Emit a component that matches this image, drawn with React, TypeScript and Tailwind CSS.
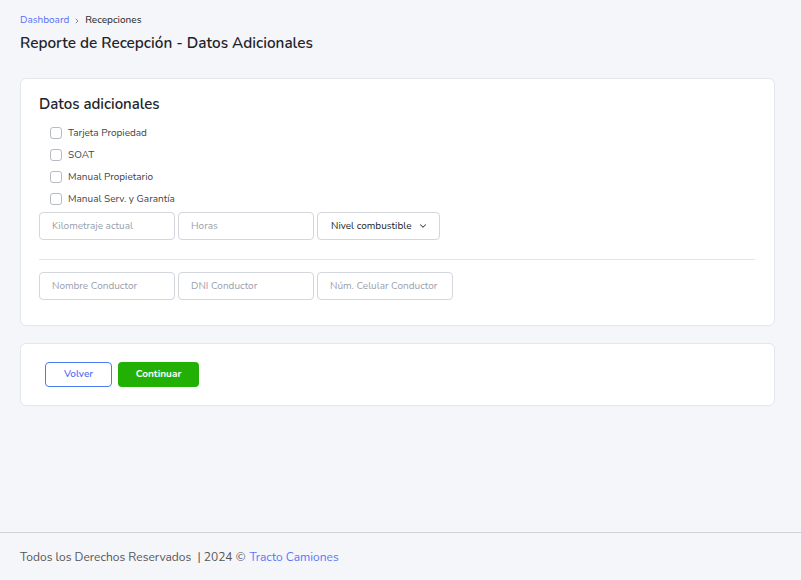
import { ChevronRight, ChevronDown } from 'lucide-react';

const font = { fontFamily: '"Nunito", "Lato", "Noto Sans", sans-serif' };

const checks = ['Tarjeta Propiedad', 'SOAT', 'Manual Propietario', 'Manual Serv. y Garantía'];

function Field({ placeholder, w = 'w-[136px]' }: { placeholder: string; w?: string }) {
  return (
    <input
      placeholder={placeholder}
      className={`${w} h-[28px] rounded-[4px] border border-[#d4d6de] bg-white px-3 text-[10px] text-[#333] placeholder:text-[#9aa0ac] outline-none`}
    />
  );
}

export default function App() {
  return (
    <div className="min-h-[580px] bg-[#f5f6fa] flex flex-col text-[#212529]" style={font}>
      <div className="flex-1 pl-5 pr-[26px] pt-[14px]">
        <div className="flex items-center gap-[4px] text-[10px] leading-[13px]">
          <span className="text-[#5470f5]">Dashboard</span>
          <ChevronRight className="w-[8px] h-[8px] text-[#888]" strokeWidth={3} />
          <span className="text-[#333] font-medium">Recepciones</span>
        </div>
        <h1 className="mt-[6px] text-[15.3px] leading-[20px] font-semibold text-[#1e2329]">
          Reporte de Recepción - Datos Adicionales
        </h1>

        <div className="mt-[25px] bg-white border border-[#e4e6ee] rounded-[6px] pl-[18px] pr-[19px] pt-[15px] pb-[25px]">
          <h2 className="text-[15px] leading-[20px] font-semibold text-[#1e2329]">Datos adicionales</h2>
          <div className="mt-[12px] flex flex-col gap-[8px] pl-[11px]">
            {checks.map((c) => (
              <label key={c} className="flex items-center gap-[6px] h-[14px] text-[10px] text-[#444]">
                <span className="w-[12px] h-[12px] rounded-[3px] border border-[#b8bcc6] bg-white" />
                {c}
              </label>
            ))}
          </div>
          <div className="mt-[6px] flex gap-[3px]">
            <Field placeholder="Kilometraje actual" />
            <Field placeholder="Horas" />
            <div className="w-[123px] h-[28px] rounded-[4px] border border-[#d4d6de] bg-white pl-[13px] pr-[11px] flex items-center justify-between text-[10px] text-[#222]">
              <span>Nivel combustible</span>
              <ChevronDown className="w-[10px] h-[10px] text-[#444]" strokeWidth={2.5} />
            </div>
          </div>
          <div className="mt-[19px] border-t border-[#e2e4ea]" />
          <div className="mt-[12px] flex gap-[3px]">
            <Field placeholder="Nombre Conductor" />
            <Field placeholder="DNI Conductor" />
            <Field placeholder="Núm. Celular Conductor" />
          </div>
        </div>

        <div className="mt-[17px] bg-white border border-[#e4e6ee] rounded-[6px] px-[24px] pt-[18px] pb-[18px] flex gap-[6px]">
          <button className="w-[67px] h-[25px] rounded-[4px] border border-[#4a7bf5] text-[#5b6ef2] text-[10px] font-semibold bg-white">
            Volver
          </button>
          <button className="w-[81px] h-[25px] rounded-[4px] bg-[#22b005] text-white text-[10px] font-bold">
            Continuar
          </button>
        </div>
      </div>

      <div className="h-[48px] border-t border-[#cfd2dc] px-5 flex items-center text-[12px] text-[#555]">
        <span>Todos los Derechos Reservados &nbsp;| 2024 © </span>
        <span className="ml-[4px] text-[#5b76f7]">Tracto Camiones</span>
      </div>
    </div>
  );
}
